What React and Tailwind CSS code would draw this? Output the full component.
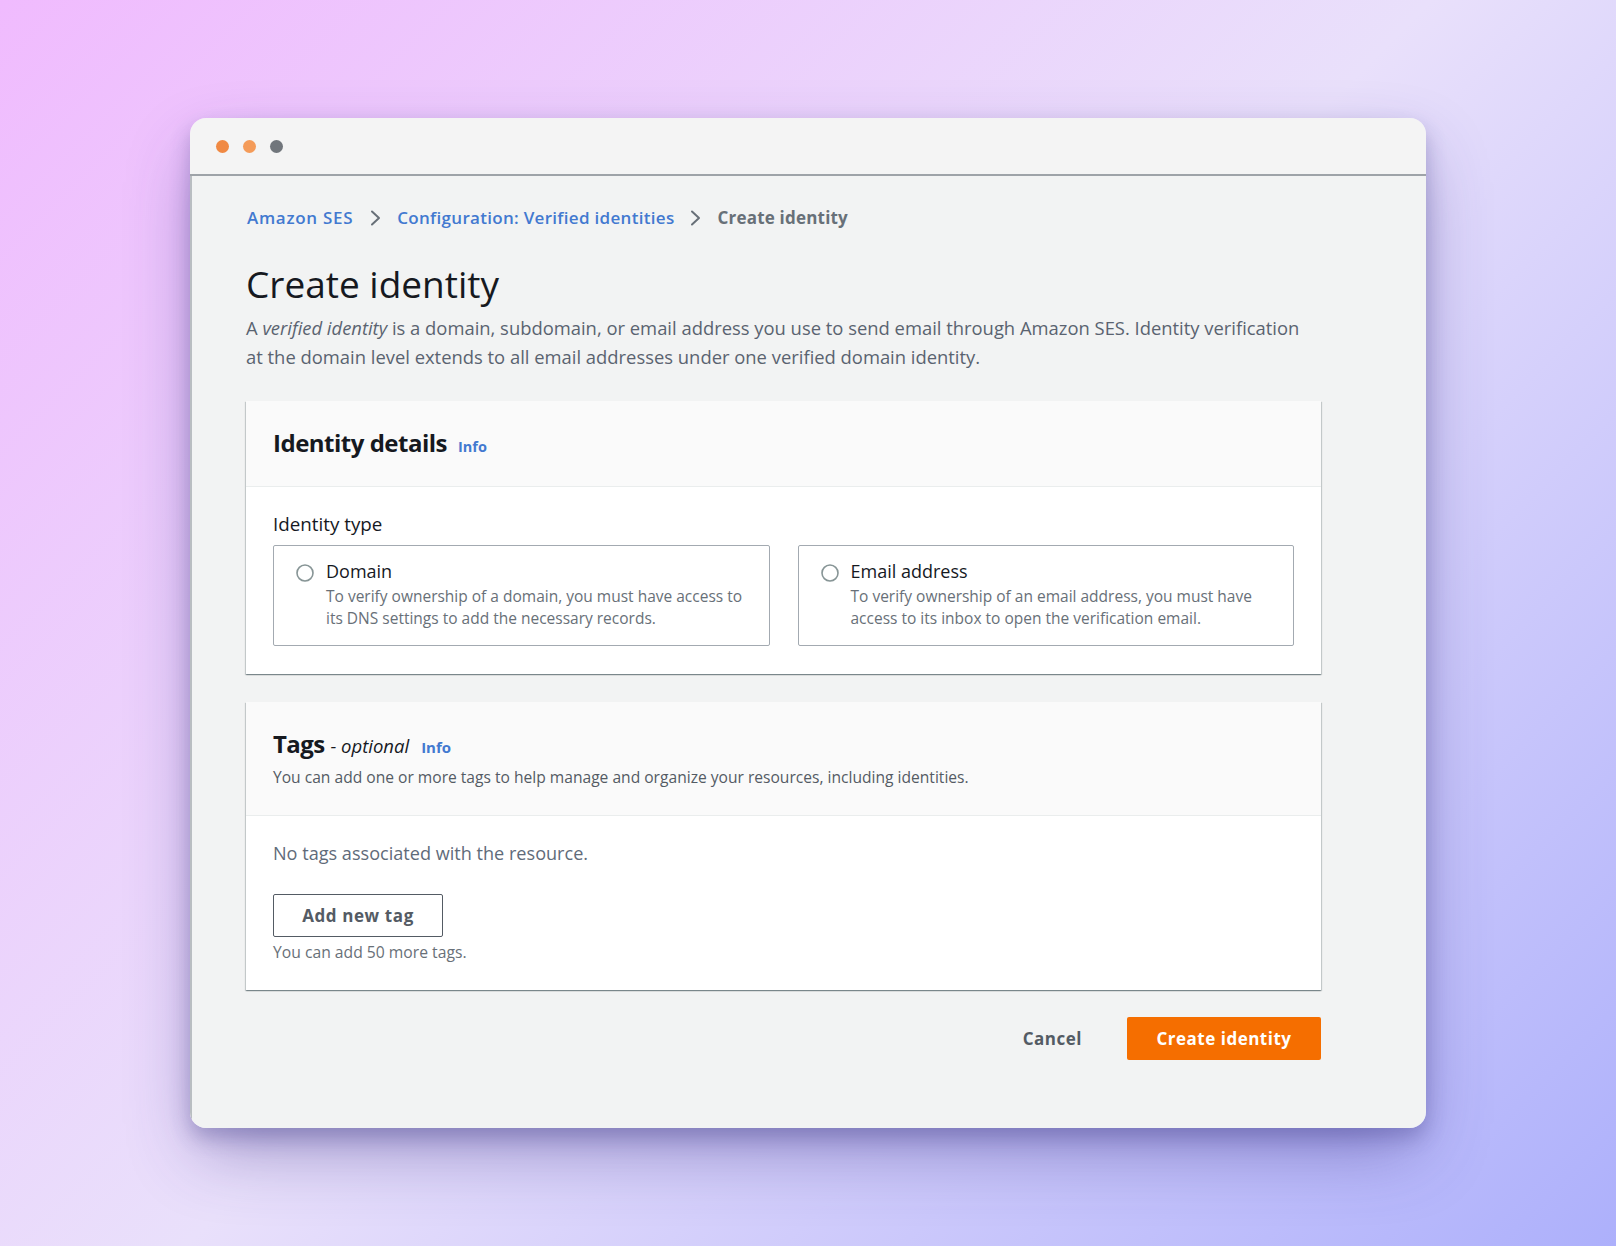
import React from "react";

function Chevron() {
  return (
    <svg width="11" height="16" viewBox="0 0 11 16" className="mx-[16px] shrink-0">
      <path d="M2 1.5 L9 8 L2 14.5" fill="none" stroke="#687078" strokeWidth="2" strokeLinecap="round" strokeLinejoin="round" />
    </svg>
  );
}

function Radio() {
  return (
    <svg width="18" height="18" viewBox="0 0 18 18" className="mt-[5px] shrink-0">
      <circle cx="9" cy="9" r="8" fill="#ffffff" stroke="#879596" strokeWidth="1.6" />
    </svg>
  );
}

function RadioCard({ title, lines }) {
  return (
    <div className="flex gap-[12px] rounded-[2px] border border-[#a3aab1] bg-white pl-[22px] pr-[10px] pt-[13px] pb-[16px]">
      <Radio />
      <div className="flex flex-col">
        <div className="text-[18px] leading-[24px] text-[#16191f]">{title}</div>
        <div className="mt-[2px] text-[15.5px] leading-[22px] text-[#687078]">
          {lines.map((l) => (
            <div key={l} className="whitespace-nowrap">{l}</div>
          ))}
        </div>
      </div>
    </div>
  );
}

const cardShadow =
  "shadow-[0_1px_1px_0_rgba(0,28,36,0.3),1px_1px_1px_0_rgba(0,28,36,0.15),-1px_1px_1px_0_rgba(0,28,36,0.15)]";

export default function App() {
  return (
    <div
      className="relative h-[1246px] w-[1616px] overflow-hidden bg-[linear-gradient(135deg,#f0bbfe_0%,#e9e0fb_50%,#adb0fb_100%)] pt-[118px] pl-[190px]"
      style={{ fontFamily: '"Open Sans", "Noto Sans", sans-serif' }}
    >
      <div className="flex h-[1010px] w-[1236px] flex-col overflow-hidden rounded-[16px] shadow-[0_10px_20px_rgba(60,55,130,0.3),0_30px_70px_-10px_rgba(60,50,140,0.45)]">
        {/* Title bar */}
        <div className="flex h-[58px] shrink-0 items-center gap-[14px] border-b-2 border-[#9ea3a8] bg-[#f4f4f4] pl-[26px]">
          <div className="h-[13px] w-[13px] rounded-full bg-[#f08943]" />
          <div className="h-[13px] w-[13px] rounded-full bg-[#f49b59]" />
          <div className="h-[13px] w-[13px] rounded-full bg-[#71767c]" />
        </div>

        {/* Content */}
        <div className="flex-1 border-l-2 border-[#b9bdc1] bg-[#f2f3f3] pl-[54px] pt-[30px]">
          <div className="w-[1075px]">
            {/* Breadcrumb */}
            <div className="flex h-[24px] items-center text-[17px] font-semibold leading-[24px] tracking-[0.3px]">
              <span className="ml-[1px] mr-[1px] tracking-[0.7px] text-[#4279d0]">Amazon SES</span>
              <Chevron />
              <span className="text-[#4279d0]">Configuration: Verified identities</span>
              <Chevron />
              <span className="font-bold tracking-[0.2px] text-[#687078]">Create identity</span>
            </div>

            {/* Heading */}
            <h1 className="mt-[32px] text-[37px] font-normal leading-[44px] text-[#16191f]">Create identity</h1>
            <p className="mt-[7px] text-[18.4px] leading-[29px] text-[#5a6370]">
              <span className="whitespace-nowrap">
                A <i>verified identity</i> is a domain, subdomain, or email address you use to send email through Amazon SES. Identity verification
              </span>
              <br />
              <span className="whitespace-nowrap">at the domain level extends to all email addresses under one verified domain identity.</span>
            </p>

            {/* Identity details card */}
            <div className={`mt-[30px] bg-white ${cardShadow}`}>
              <div className="border-b border-[#eaeded] bg-[#fafafa] px-[27px] pt-[26px] pb-[27px]">
                <div className="flex items-baseline gap-[11px]">
                  <span className="text-[24px] font-bold leading-[32px] tracking-[-0.5px] text-[#16191f]">Identity details</span>
                  <span className="text-[14.5px] font-bold leading-[20px] text-[#4279d0]">Info</span>
                </div>
              </div>
              <div className="px-[27px] pt-[25px] pb-[28px]">
                <div className="text-[18.8px] leading-[24px] text-[#16191f]">Identity type</div>
                <div className="mt-[9px] grid grid-cols-2 gap-[28px]">
                  <RadioCard
                    title="Domain"
                    lines={[
                      "To verify ownership of a domain, you must have access to",
                      "its DNS settings to add the necessary records.",
                    ]}
                  />
                  <RadioCard
                    title="Email address"
                    lines={[
                      "To verify ownership of an email address, you must have",
                      "access to its inbox to open the verification email.",
                    ]}
                  />
                </div>
              </div>
            </div>

            {/* Tags card */}
            <div className={`mt-[28px] bg-white ${cardShadow}`}>
              <div className="border-b border-[#eaeded] bg-[#fafafa] px-[27px] pt-[26px] pb-[27px]">
                <div className="flex items-baseline">
                  <span className="text-[24px] font-bold leading-[32px] tracking-[-0.6px] text-[#16191f]">Tags</span>
                  <span className="ml-[6px] text-[18.5px] italic leading-[24px] text-[#16191f]">- optional</span>
                  <span className="ml-[12px] text-[15px] font-bold leading-[20px] text-[#4279d0]">Info</span>
                </div>
                <div className="mt-[6px] text-[15.6px] leading-[22px] text-[#545b64]">
                  You can add one or more tags to help manage and organize your resources, including identities.
                </div>
              </div>
              <div className="px-[27px] pt-[25px] pb-[27px]">
                <div className="text-[18.1px] leading-[24px] text-[#5f6b7a]">No tags associated with the resource.</div>
                <button className="mt-[29px] flex h-[43px] w-[170px] items-center justify-center rounded-[2px] border border-[#545b64] bg-white text-[17px] font-bold tracking-[0.6px] text-[#545b64]">
                  Add new tag
                </button>
                <div className="mt-[4px] text-[15.7px] leading-[22px] text-[#687078]">You can add 50 more tags.</div>
              </div>
            </div>

            {/* Footer */}
            <div className="mt-[27px] flex items-center justify-end">
              <span className="mr-[45px] text-[17px] font-bold tracking-[0.5px] text-[#545b64]">Cancel</span>
              <button className="flex h-[43px] w-[194px] items-center justify-center rounded-[2px] bg-[#f56e00] text-[17px] font-bold tracking-[0.5px] text-white">
                Create identity
              </button>
            </div>
          </div>
        </div>
      </div>
    </div>
  );
}
